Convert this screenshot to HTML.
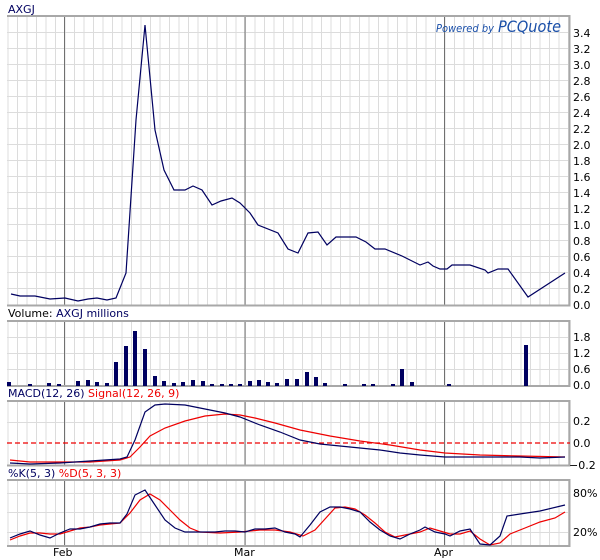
<!DOCTYPE html>
<html><head><meta charset="utf-8"><style>
html,body{margin:0;padding:0;background:#fff;}
svg{display:block;font-family:"DejaVu Sans","Liberation Sans",sans-serif;}
</style></head><body>
<svg width="600" height="560" viewBox="0 0 600 560" xmlns="http://www.w3.org/2000/svg">
<defs>
<pattern id="vg" x="7.5" y="0" width="9.5" height="600" patternUnits="userSpaceOnUse">
<line x1="0.5" y1="0" x2="0.5" y2="600" stroke="#dcdcdc" stroke-width="1"/>
</pattern>
</defs>
<g>
<rect x="7" y="15" width="563" height="290" fill="url(#vg)"/>
<rect x="7" y="321" width="563" height="65" fill="url(#vg)"/>
<rect x="7" y="400" width="563" height="65" fill="url(#vg)"/>
<rect x="7" y="480" width="563" height="66" fill="url(#vg)"/>
</g>
<g stroke="#dcdcdc" stroke-width="1">
<path d="M7 32.5H570M7 48.5H570M7 64.5H570M7 80.5H570M7 96.5H570M7 112.5H570M7 128.5H570M7 144.5H570M7 160.5H570M7 176.5H570M7 192.5H570M7 208.5H570M7 224.5H570M7 240.5H570M7 256.5H570M7 272.5H570M7 288.5H570"/>
<path d="M7 337.5H570M7 353.5H570M7 369.5H570"/>
<path d="M7 422.5H570"/>
<path d="M7 493.5H570M7 512.5H570M7 532.5H570"/>
</g>
<g stroke="#707070" stroke-width="1">
<path d="M64.5 15V305M245 15V305M444.5 15V305"/>
<path d="M64.5 321V386M245 321V386M444.5 321V386"/>
<path d="M64.5 400V465M245 400V465M444.5 400V465"/>
<path d="M64.5 480V546M245 480V546M444.5 480V546"/>
</g>
<g fill="none" stroke="#a8a8a8" stroke-width="2">
<path d="M7 16H569.5V305.5H7"/>
<path d="M7 321H569.5V386H7"/>
<path d="M7 401H569.5V465.5H7"/>
<path d="M7 480H569.5V546H7"/>
</g>
<text x="436" y="32" font-size="10.5" font-style="italic" fill="#1a4fa8" textLength="58" lengthAdjust="spacingAndGlyphs">Powered by</text>
<text x="498" y="32" font-size="16" font-style="italic" fill="#1a4fa8" textLength="63" lengthAdjust="spacingAndGlyphs">PCQuote</text>
<text x="8" y="13" font-size="11" fill="#000060">AXGJ</text>
<g font-size="11" fill="#000">
<text x="573" y="37">3.4</text><text x="573" y="53">3.2</text><text x="573" y="69">3.0</text><text x="573" y="85">2.8</text><text x="573" y="101">2.6</text><text x="573" y="117">2.4</text><text x="573" y="133">2.2</text><text x="573" y="149">2.0</text><text x="573" y="165">1.8</text><text x="573" y="181">1.6</text><text x="573" y="197">1.4</text><text x="573" y="213">1.2</text><text x="573" y="229">1.0</text><text x="573" y="245">0.8</text><text x="573" y="261">0.6</text><text x="573" y="277">0.4</text><text x="573" y="293">0.2</text><text x="573" y="309">0.0</text>
<text x="573" y="341">1.8</text><text x="573" y="357">1.2</text><text x="573" y="373">0.6</text><text x="573" y="389">0.0</text>
<text x="573" y="425">0.2</text><text x="573" y="447">0.0</text><text x="569" y="469">−0.2</text>
<text x="573" y="497">80%</text><text x="573" y="536">20%</text>
<text x="53" y="556">Feb</text><text x="234" y="556">Mar</text><text x="434" y="556">Apr</text>
</g>
<polyline fill="none" stroke="#000060" stroke-width="1.2" points="11,294 20,296 35,296 50,299 65,298 78,301 88,299 97,298 107,300 116,298 126,273 136,120 145,25 155,130 164,170 174,190 185,190 193,186 202,190 212,205 221,201 232,198 240,203 250,213 258,225 278,233 288,249 298,253 308,233 318,232 327,245 336,237 356,237 366,242 375,249 385,249 402,256 410,260 420,265 428,262 433,266 440,269 447,269 452,265 470,265 485,270 488,273 498,269 508,269 528,297 565,273"/>
<text x="8" y="317" font-size="11"><tspan fill="#000">Volume:</tspan><tspan fill="#000060"> AXGJ millions</tspan></text>
<g fill="#000060">
<rect x="7" y="382" width="4" height="4"/><rect x="28" y="384" width="4" height="2"/><rect x="47" y="383" width="4" height="3"/><rect x="57" y="384" width="4" height="2"/><rect x="76" y="381" width="4" height="5"/><rect x="86" y="380" width="4" height="6"/><rect x="95" y="382" width="4" height="4"/><rect x="105" y="383" width="4" height="3"/><rect x="114" y="362" width="4" height="24"/><rect x="124" y="346" width="4" height="40"/><rect x="133" y="331" width="4" height="55"/><rect x="143" y="349" width="4" height="37"/><rect x="153" y="376" width="4" height="10"/><rect x="162" y="381" width="4" height="5"/><rect x="172" y="383" width="4" height="3"/><rect x="181" y="382" width="4" height="4"/><rect x="191" y="380" width="4" height="6"/><rect x="201" y="381" width="4" height="5"/><rect x="210" y="384" width="4" height="2"/><rect x="220" y="384" width="4" height="2"/><rect x="229" y="384" width="4" height="2"/><rect x="238" y="384" width="4" height="2"/><rect x="248" y="381" width="4" height="5"/><rect x="257" y="380" width="4" height="6"/><rect x="266" y="382" width="4" height="4"/><rect x="275" y="383" width="4" height="3"/><rect x="285" y="379" width="4" height="7"/><rect x="295" y="379" width="4" height="7"/><rect x="305" y="372" width="4" height="14"/><rect x="314" y="377" width="4" height="9"/><rect x="323" y="383" width="4" height="3"/><rect x="343" y="384" width="4" height="2"/><rect x="362" y="384" width="4" height="2"/><rect x="371" y="384" width="4" height="2"/><rect x="391" y="384" width="4" height="2"/><rect x="400" y="369" width="4" height="17"/><rect x="410" y="382" width="4" height="4"/><rect x="447" y="384" width="4" height="2"/><rect x="524" y="345" width="4" height="41"/>
</g>
<text x="8" y="397" font-size="11"><tspan fill="#000060">MACD(12, 26)</tspan><tspan fill="#ee0000"> Signal(12, 26, 9)</tspan></text>
<line x1="7" y1="443" x2="570" y2="443" stroke="#ee0000" stroke-width="1.3" stroke-dasharray="5,3"/>
<polyline fill="none" stroke="#ee0000" stroke-width="1.2" points="10,460 30,462 60,462 90,462 120,460 130,457 140,447 150,436 165,428 185,421 205,416 225,414 240,415 255,418 275,423 300,430 330,436 360,441 390,445 420,450 445,453 480,455 520,456 565,457"/>
<polyline fill="none" stroke="#000060" stroke-width="1.2" points="10,463 30,464 60,463 90,461 120,459 127,457 135,440 145,412 155,405 165,404 185,405 205,409 225,413 240,417 260,425 280,432 300,440 320,444 340,446 360,448 380,450 400,453 420,455 445,457 480,457 520,457 540,458 565,457"/>
<text x="8" y="477" font-size="11"><tspan fill="#000060">%K(5, 3)</tspan><tspan fill="#ee0000"> %D(5, 3, 3)</tspan></text>
<polyline fill="none" stroke="#ee0000" stroke-width="1.2" points="10,540 20,536 30,533 40,533 50,534 60,534 70,531 80,528 90,527 100,525 110,524 120,523 130,513 140,500 150,494 160,500 170,510 180,520 190,528 200,532 220,533 240,532 260,530 275,530 290,532 303,536 315,530 325,519 335,508 345,507 355,509 365,515 375,523 385,532 395,537 410,534 420,532 430,528 440,531 450,534 460,534 470,531 480,539 490,545 500,543 510,534 525,528 540,522 555,518 565,512"/>
<polyline fill="none" stroke="#000060" stroke-width="1.2" points="10,538 20,534 30,531 40,535 50,538 60,533 70,529 80,529 90,527 100,524 110,523 120,523 127,514 135,495 145,490 155,505 165,520 175,528 185,532 195,532 205,532 215,532 225,531 235,531 245,532 255,529 265,529 275,528 285,532 295,534 300,537 310,525 320,512 330,507 340,507 350,509 360,512 370,522 380,530 390,536 400,539 410,534 420,530 425,527 435,532 445,534 450,536 460,531 470,529 480,544 490,545 500,536 507,516 520,514 540,511 565,505"/>
</svg>
</body></html>
